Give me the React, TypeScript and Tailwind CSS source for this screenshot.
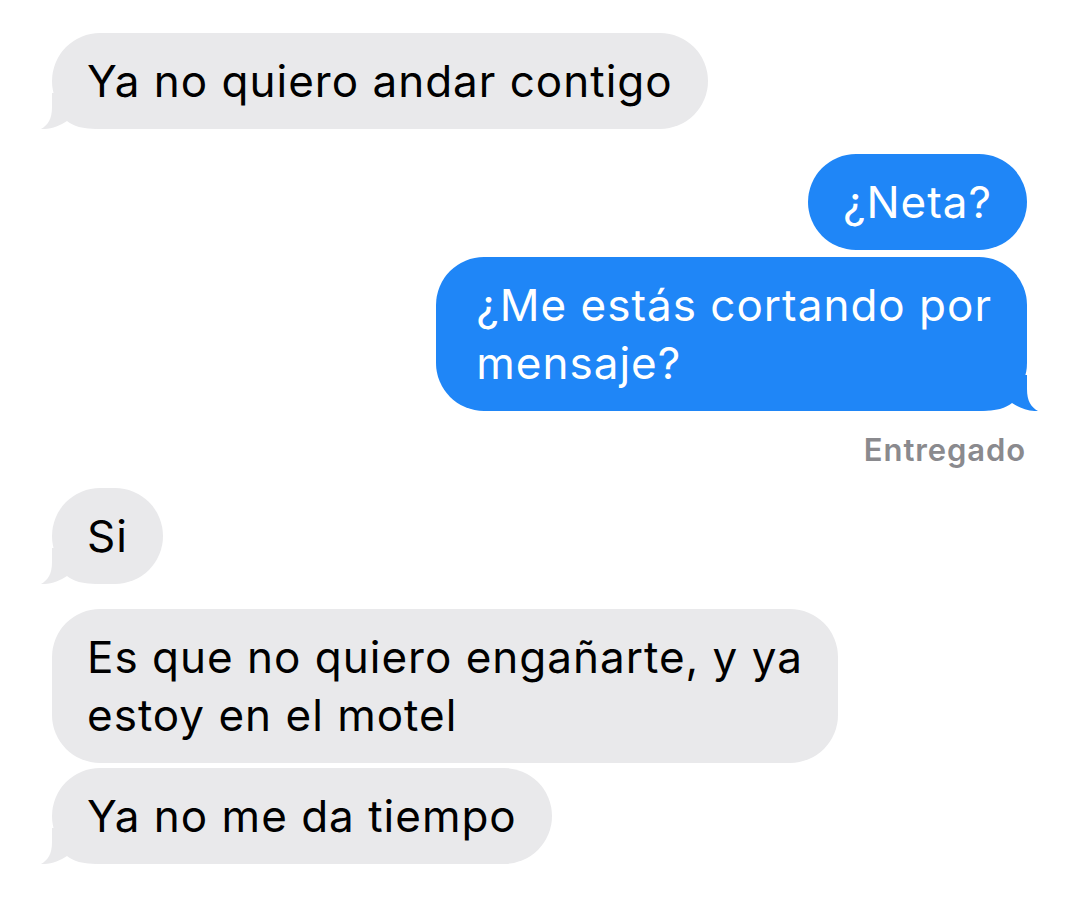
import React from "react";

type Side = "left" | "right";

const GRAY = "#e9e9eb";
const BLUE = "#1f86f7";

function Tail({ side, color }: { side: Side; color: string }) {
  return (
    <svg
      viewBox="0 0 60 36"
      fill={color}
      className={
        side === "left"
          ? "absolute -left-3 bottom-0 w-[60px] h-9"
          : "absolute -right-3 bottom-0 w-[60px] h-9 -scale-x-100"
      }
    >
      <path d="M12,0 V14 C12,26 8,32 1,36 C10,36.5 20,33 27,28 C33,33 42,36 60,36 V0 Z" />
    </svg>
  );
}

function Bubble({
  side,
  tail,
  children,
  className = "",
}: {
  side: Side;
  tail?: boolean;
  children: React.ReactNode;
  className?: string;
}) {
  const me = side === "right";
  return (
    <div
      className={`relative w-fit rounded-[48px] px-[35px] py-[19px] text-[44px] leading-[58px] tracking-[1px] ${
        me ? "self-end bg-[#1f86f7] text-white" : "self-start bg-[#e9e9eb] text-black"
      } ${className}`}
    >
      {tail && <Tail side={side} color={me ? BLUE : GRAY} />}
      <span className="relative">{children}</span>
    </div>
  );
}

export default function App() {
  return (
    <div
      className="min-h-screen bg-white flex flex-col pl-[52px] pr-[53px] pt-[33px]"
      style={{ fontFamily: "Inter, 'Liberation Sans', sans-serif" }}
    >
      <Bubble side="left" tail>
        Ya no quiero andar contigo
      </Bubble>

      <Bubble side="right" className="mt-[25px]">
        ¿Neta?
      </Bubble>
      <Bubble side="right" tail className="mt-[7px] pl-[40px]">
        ¿Me estás cortando por
        <br />
        mensaje?
      </Bubble>
      <div className="self-end mt-[21px] mr-[1px] text-[31px] leading-[36px] font-semibold tracking-[0.9px] text-[#8a8a8e]">
        Entregado
      </div>

      <Bubble side="left" tail className="mt-[20px]">
        Si
      </Bubble>
      <Bubble side="left" className="mt-[25px]">
        Es que no quiero engañarte, y ya
        <br />
        estoy en el motel
      </Bubble>
      <Bubble side="left" tail className="mt-[5px]">
        Ya no me da tiempo
      </Bubble>
    </div>
  );
}
